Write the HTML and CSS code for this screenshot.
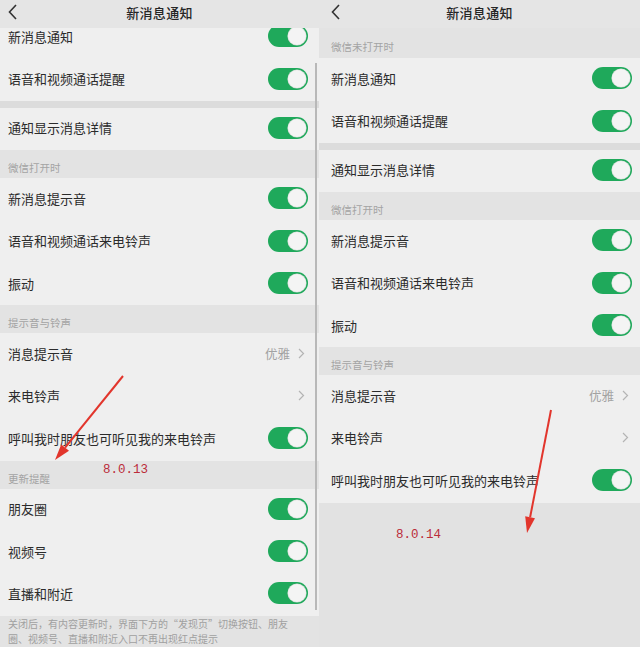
FILE: index.html
```html
<!DOCTYPE html>
<html lang="zh-CN">
<head>
<meta charset="utf-8">
<title>新消息通知</title>
<link rel="stylesheet" href="styles.css">
</head>
<body>
<div class="page">
  <section class="phone phone-left">
    <header class="bar">
      <svg class="back" width="10" height="16" viewBox="0 0 10 16"><polyline points="8,1 1.5,8 8,15" fill="none" stroke="#333" stroke-width="1.6"/></svg>
      <h1 class="title">新消息通知</h1>
    </header>
    <div class="viewport">
      <div class="list list-shifted">
        <div class="row"><span class="label">新消息通知</span><span class="toggle"></span></div>
        <div class="row"><span class="label">语音和视频通话提醒</span><span class="toggle"></span></div>
        <div class="gap"></div>
        <div class="row"><span class="label">通知显示消息详情</span><span class="toggle"></span></div>
        <div class="band">微信打开时</div>
        <div class="row"><span class="label">新消息提示音</span><span class="toggle"></span></div>
        <div class="row"><span class="label">语音和视频通话来电铃声</span><span class="toggle"></span></div>
        <div class="row"><span class="label">振动</span><span class="toggle"></span></div>
        <div class="band">提示音与铃声</div>
        <div class="row"><span class="label">消息提示音</span><span class="value">优雅<svg class="chev" width="7" height="11" viewBox="0 0 7 11"><polyline points="1,1 5.5,5.5 1,10" fill="none" stroke="#b4b4b4" stroke-width="1.2"/></svg></span></div>
        <div class="row"><span class="label">来电铃声</span><span class="value"><svg class="chev" width="7" height="11" viewBox="0 0 7 11"><polyline points="1,1 5.5,5.5 1,10" fill="none" stroke="#b4b4b4" stroke-width="1.2"/></svg></span></div>
        <div class="row"><span class="label">呼叫我时朋友也可听见我的来电铃声</span><span class="toggle"></span></div>
        <div class="band">更新提醒</div>
        <div class="row"><span class="label">朋友圈</span><span class="toggle"></span></div>
        <div class="row"><span class="label">视频号</span><span class="toggle"></span></div>
        <div class="row"><span class="label">直播和附近</span><span class="toggle"></span></div>
      </div>
      <p class="note">关闭后，有内容更新时，界面下方的“发现页”切换按钮、朋友圈、视频号、直播和附近入口不再出现红点提示</p>
    </div>
    <div class="scrollbar"></div>
    <span class="ver ver-left">8.0.13</span>
  </section>
  <section class="phone phone-right">
    <header class="bar">
      <svg class="back" width="10" height="16" viewBox="0 0 10 16"><polyline points="8,1 1.5,8 8,15" fill="none" stroke="#333" stroke-width="1.6"/></svg>
      <h1 class="title">新消息通知</h1>
    </header>
    <div class="list">
      <div class="band band-first">微信未打开时</div>
      <div class="row"><span class="label">新消息通知</span><span class="toggle"></span></div>
      <div class="row"><span class="label">语音和视频通话提醒</span><span class="toggle"></span></div>
      <div class="gap"></div>
      <div class="row"><span class="label">通知显示消息详情</span><span class="toggle"></span></div>
      <div class="band">微信打开时</div>
      <div class="row"><span class="label">新消息提示音</span><span class="toggle"></span></div>
      <div class="row"><span class="label">语音和视频通话来电铃声</span><span class="toggle"></span></div>
      <div class="row"><span class="label">振动</span><span class="toggle"></span></div>
      <div class="band">提示音与铃声</div>
      <div class="row"><span class="label">消息提示音</span><span class="value">优雅<svg class="chev" width="7" height="11" viewBox="0 0 7 11"><polyline points="1,1 5.5,5.5 1,10" fill="none" stroke="#b4b4b4" stroke-width="1.2"/></svg></span></div>
      <div class="row"><span class="label">来电铃声</span><span class="value"><svg class="chev" width="7" height="11" viewBox="0 0 7 11"><polyline points="1,1 5.5,5.5 1,10" fill="none" stroke="#b4b4b4" stroke-width="1.2"/></svg></span></div>
      <div class="row"><span class="label">呼叫我时朋友也可听见我的来电铃声</span><span class="toggle"></span></div>
    </div>
    <span class="ver ver-right">8.0.14</span>
  </section>
  <svg class="arrows" width="640" height="647" viewBox="0 0 640 647">
    <line x1="123" y1="376" x2="65.1" y2="447.6" stroke="#e2352c" stroke-width="2"/>
    <polygon points="55,460 69,450.7 61.2,444.4" fill="#e2352c"/>
    <line x1="551" y1="410" x2="530.1" y2="517.3" stroke="#e2352c" stroke-width="2"/>
    <polygon points="527,533 535,518.3 525.2,516.3" fill="#e2352c"/>
  </svg>
</div>
</body>
</html>
```

FILE: styles.css
```css
* { box-sizing: border-box; }
html, body { margin: 0; padding: 0; }
body {
  width: 640px;
  height: 647px;
  overflow: hidden;
  background: #e4e4e4;
  font-family: "Noto Sans CJK SC", "Noto Sans", sans-serif;
  color: #2a2a2a;
}
.page {
  position: relative;
  display: flex;
  width: 640px;
  height: 647px;
}
.phone {
  position: relative;
  display: flex;
  flex-direction: column;
  height: 647px;
  overflow: hidden;
  background: #e3e3e3;
}
.phone-left { width: 319px; }
.phone-right { width: 321px; background: #e2e2e2; }
.bar {
  position: relative;
  z-index: 2;
  flex: 0 0 28px;
  height: 28px;
  display: flex;
  align-items: center;
  justify-content: center;
  padding-bottom: 3px;
  background: #e5e5e5;
}
.back { position: absolute; top: 4px; }
.phone-left .back { left: 8px; }
.phone-right .back { left: 12px; }
.title {
  margin: 0;
  font-size: 13px;
  line-height: 16px;
  font-weight: 500;
  color: #262626;
  letter-spacing: 0.3px;
}
.viewport {
  flex: 1;
  overflow: hidden;
}
.list { display: flex; flex-direction: column; }
.list-shifted { margin-top: -12px; }
.row {
  height: 42.4px;
  display: flex;
  align-items: center;
  justify-content: space-between;
  padding-bottom: 2px;
  background: #efefef;
}
.phone-left .row { padding-left: 8px; padding-right: 11px; }
.phone-right .row { padding-left: 12px; padding-right: 8px; }
.label { font-size: 13px; line-height: 15px; color: #2b2b2b; }
.value {
  display: flex;
  align-items: center;
  gap: 8px;
  font-size: 12.5px;
  line-height: 15px;
  color: #a2a2a2;
}
.value .chev { margin-right: 3px; }
.toggle {
  position: relative;
  width: 40px;
  height: 22px;
  border-radius: 11px;
  background: #1fa95b;
}
.toggle::after {
  content: "";
  position: absolute;
  right: 2px;
  top: 2px;
  width: 18px;
  height: 18px;
  border-radius: 50%;
  background: #f4f4f4;
  box-shadow: 0 0 0 0.6px #cfd8d2;
}
.gap { height: 7px; background: #dcdcdc; }
.band {
  height: 28px;
  display: flex;
  align-items: flex-end;
  padding-bottom: 3px;
  font-size: 10.5px;
  line-height: 15px;
  color: #a3a3a3;
  background: #e3e3e3;
}
.phone-left .band { padding-left: 8px; }
.phone-right .band { padding-left: 12px; }
.band-first { height: 30px; padding-bottom: 4px; }
.note {
  margin: 0;
  width: 302px;
  padding: 0 0 0 8px;
  font-size: 10px;
  line-height: 15px;
  color: #a0a0a0;
}
.scrollbar {
  position: absolute;
  left: 315px;
  top: 63px;
  width: 2px;
  height: 547px;
  background: #b8b8b8;
}
.ver {
  position: absolute;
  font-family: "Liberation Mono", monospace;
  font-size: 12.5px;
  color: #bb2c3a;
  line-height: 14px;
}
.ver-left { left: 103px; top: 463px; }
.ver-right { left: 77px; top: 528px; }
.arrows {
  position: absolute;
  left: 0;
  top: 0;
  pointer-events: none;
}
```
